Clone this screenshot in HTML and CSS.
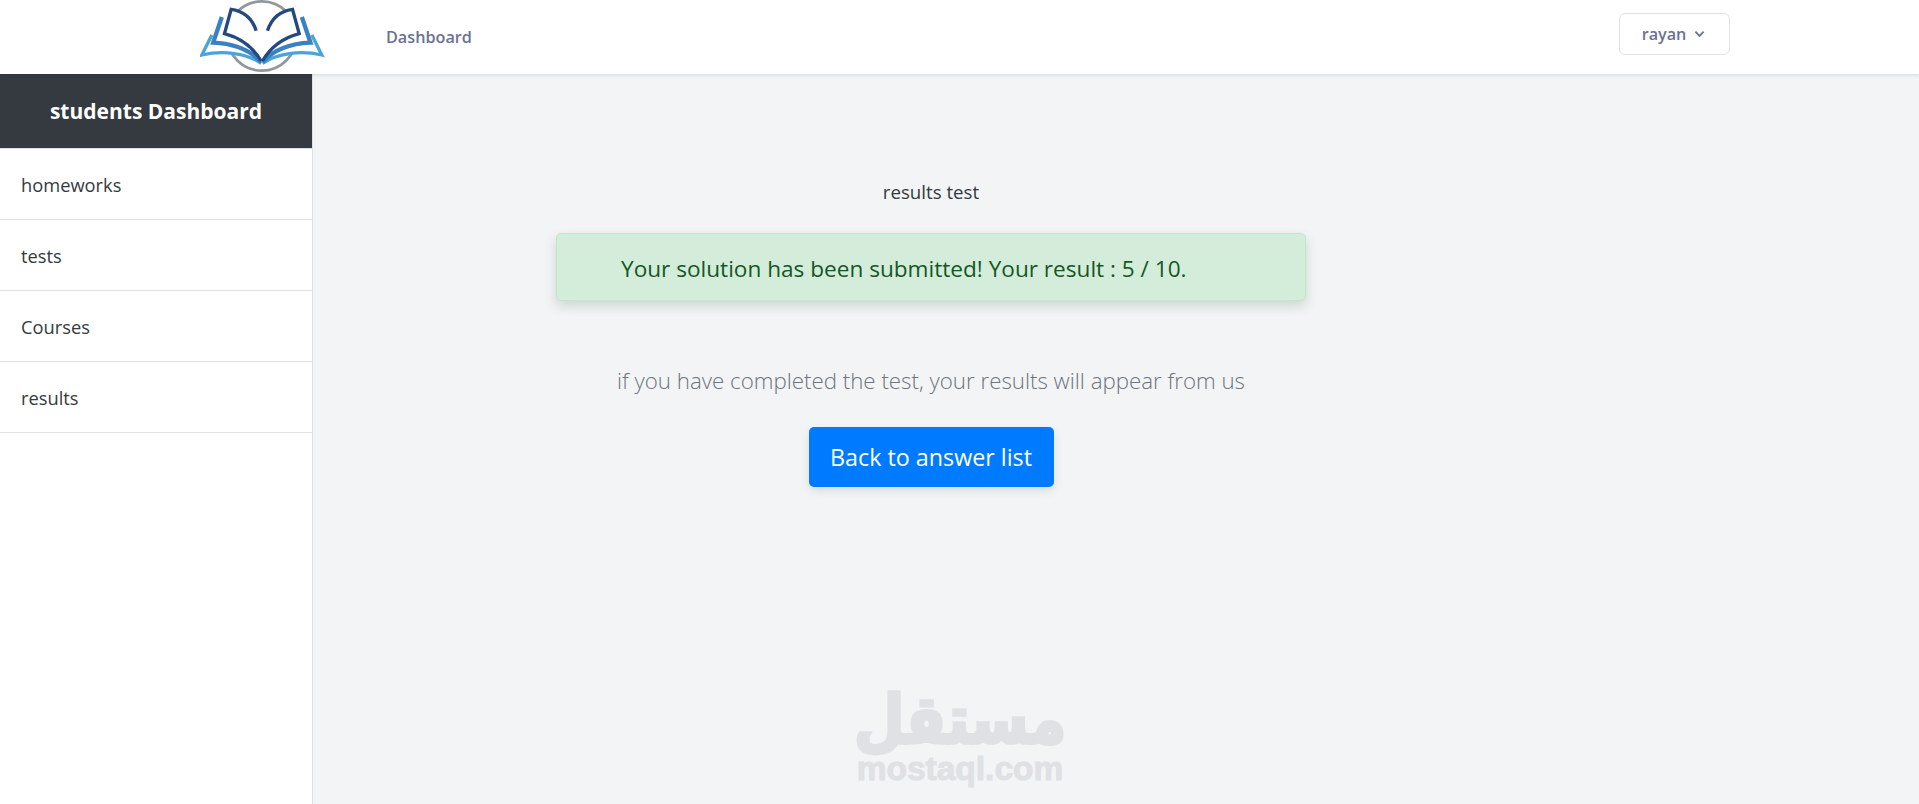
FILE: index.html
```html
<!DOCTYPE html>
<html lang="en">
<head>
  <meta charset="UTF-8" />
  <meta name="viewport" content="width=device-width, initial-scale=1.0" />
  <title>students Dashboard</title>
  <link rel="stylesheet" href="styles.css">
</head>
<body>
  <header class="topbar">
    <svg class="logo" viewBox="60 0 380 222" role="img" aria-label="Logo">
      <circle cx="245" cy="108" r="104" fill="none" stroke="#8f989f" stroke-width="8" />
      <g>
        <path d="M243 190 C200 160 130 150 65 165 L95 105 L243 140 Z" fill="#fff" />
        <path d="M243 190 C200 160 130 150 65 165 L95 105" fill="none" stroke="#4ba4d8" stroke-width="10" />
        <path d="M243 186 C205 145 150 130 99 128 L125 51 L243 120 Z" fill="#fff" />
        <path d="M243 186 C205 145 150 130 99 128 L125 51" fill="none" stroke="#3a81c3" stroke-width="13" />
        <path d="M243 183 C215 135 175 112 133 101 L153 28 C190 33 216 55 228 92 Z" fill="#fff" />
        <path d="M243 183 C215 135 175 112 133 101 L153 28 C190 33 216 55 228 92" fill="none" stroke="#24487f" stroke-width="10" />
      </g>
      <g transform="translate(490 0) scale(-1 1)">
        <path d="M243 190 C200 160 130 150 65 165 L95 105 L243 140 Z" fill="#fff" />
        <path d="M243 190 C200 160 130 150 65 165 L95 105" fill="none" stroke="#4ba4d8" stroke-width="10" />
        <path d="M243 186 C205 145 150 130 99 128 L125 51 L243 120 Z" fill="#fff" />
        <path d="M243 186 C205 145 150 130 99 128 L125 51" fill="none" stroke="#3a81c3" stroke-width="13" />
        <path d="M243 183 C215 135 175 112 133 101 L153 28 C190 33 216 55 228 92 Z" fill="#fff" />
        <path d="M243 183 C215 135 175 112 133 101 L153 28 C190 33 216 55 228 92" fill="none" stroke="#24487f" stroke-width="10" />
      </g>
    </svg>
    <a class="topbar-link" href="#">Dashboard</a>
    <button class="user-btn">rayan
      <svg class="chevron" viewBox="0 0 12 8"><path d="M1.5 1.5 L6 6 L10.5 1.5" fill="none" stroke="#6b7194" stroke-width="2" /></svg>
    </button>
  </header>

  <div class="layout">
    <aside class="sidebar">
      <div class="sidebar-title">students Dashboard</div>
      <a class="side-item" href="#">homeworks</a>
      <a class="side-item" href="#">tests</a>
      <a class="side-item" href="#">Courses</a>
      <a class="side-item" href="#">results</a>
    </aside>

    <main class="content">
      <div class="panel">
        <h5 class="panel-title">results test</h5>
        <div class="alert">Your solution has been submitted! Your result : 5 / 10.</div>
        <p class="lead">if you have completed the test, your results will appear from us</p>
        <a class="btn" href="#">Back to answer list</a>
      </div>
      <div class="watermark">
        <span class="wm-ar" lang="ar" dir="rtl">مستقل</span>
        <span class="wm-en">mostaql.com</span>
      </div>
    </main>
  </div>
</body>
</html>
```

FILE: styles.css
```css
* {
  box-sizing: border-box;
}
html, body {
  height: 100%;
}
body {
  margin: 0;
  font-family: 'Open Sans', 'Noto Sans', sans-serif;
  background: #f3f4f6;
  color: #343a40;
  overflow: hidden;
}
a {
  text-decoration: none;
}
.topbar {
  display: flex;
  align-items: center;
  height: 74px;
  padding-left: 200px;
  padding-right: 189px;
  background: #fff;
  box-shadow: 0 1px 4px rgba(0,0,0,0.12);
  position: relative;
  z-index: 2;
}
.logo {
  width: 127px;
  height: 74px;
}
.topbar-link {
  margin-left: 59px;
  font-size: 16.2px;
  font-weight: 600;
  color: #6b7194;
}
.user-btn {
  margin-left: auto;
  margin-bottom: 7px;
  display: flex;
  align-items: center;
  justify-content: center;
  gap: 8px;
  width: 111px;
  height: 42px;
  padding-right: 8px;
  background: #fff;
  border: 1px solid #e0e2e8;
  border-radius: 6px;
  font-family: inherit;
  font-size: 16.2px;
  font-weight: 600;
  color: #6b7194;
}
.chevron {
  width: 11px;
  height: 8px;
}
.layout {
  display: flex;
  height: calc(100% - 74px);
}
.sidebar {
  width: 313px;
  flex-shrink: 0;
  background: #fff;
  border-right: 1px solid #dee2e6;
}
.sidebar-title {
  height: 75px;
  line-height: 74px;
  background: #343a40;
  border-bottom: 1px solid #dee2e6;
  color: #fff;
  font-size: 21px;
  font-weight: 700;
  text-align: center;
}
.side-item {
  display: flex;
  align-items: center;
  height: 71px;
  padding-left: 21px;
  border-bottom: 1px solid #dee2e6;
  color: #343a40;
  font-size: 18.3px;
}
.content {
  flex: 1;
  position: relative;
}
.panel {
  width: 750px;
  margin-left: 243px;
  padding-top: 107px;
  display: flex;
  flex-direction: column;
  align-items: center;
}
.panel-title {
  margin: 0;
  font-size: 18.7px;
  font-weight: 400;
  line-height: 22px;
  color: #343a40;
}
.alert {
  width: 100%;
  height: 68px;
  margin-top: 30px;
  padding: 2px 0 0 64px;
  display: flex;
  align-items: center;
  background: #d4edda;
  border: 1px solid #c3e6cb;
  border-radius: 5px;
  box-shadow: 0 5px 12px rgba(21,87,36,0.18);
  color: #155724;
  font-size: 22.6px;
}
.lead {
  margin: 65px 0 0;
  font-size: 22.3px;
  line-height: 30px;
  font-weight: 300;
  color: #6c757d;
}
.btn {
  margin-top: 31px;
  display: flex;
  align-items: center;
  justify-content: center;
  width: 245px;
  height: 60px;
  background: #007bff;
  border-radius: 5px;
  box-shadow: 0 4px 10px rgba(0,0,0,0.1);
  color: #fff;
  font-size: 23.3px;
}
.watermark {
  position: absolute;
  left: 542px;
  top: 610px;
  width: 210px;
  display: flex;
  flex-direction: column;
  align-items: center;
  color: #dfe1e4;
  font-weight: 700;
}
.wm-ar {
  font-family: 'DejaVu Sans', sans-serif;
  font-size: 58px;
  line-height: 70px;
  -webkit-text-stroke: 3px #dfe1e4;
  transform: translateY(6px) scaleY(1.15);
  transform-origin: bottom;
}
.wm-en {
  font-family: 'Liberation Sans', sans-serif;
  font-size: 33.5px;
  line-height: 30px;
  -webkit-text-stroke: 1px #dfe1e4;
}
```
